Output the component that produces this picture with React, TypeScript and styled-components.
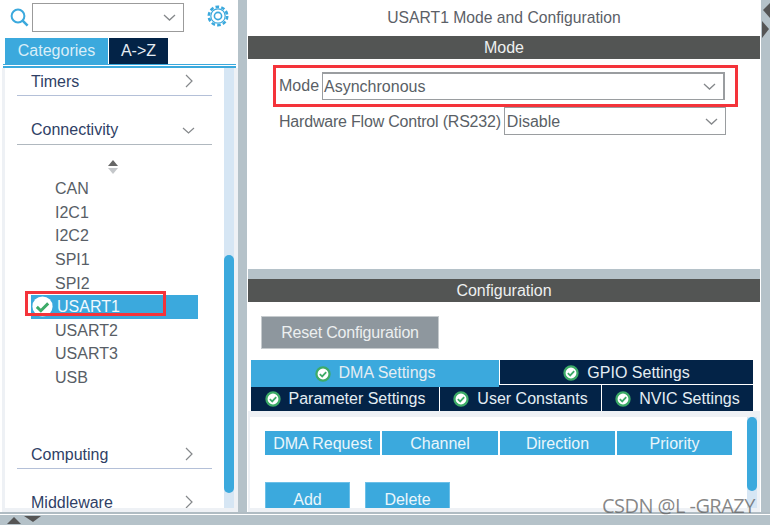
import * as React from 'react';
import styled, { createGlobalStyle } from 'styled-components';

const blue = '#3ba9dd';
const navy = '#032347';
const steel = '#b5c2c9';
const pale = '#eef1f5';

const GlobalStyle = createGlobalStyle`
  html, body {
    margin: 0;
    padding: 0;
    background: #fff;
  }
  body {
    font-family: "Liberation Sans", Arial, sans-serif;
    font-size: 16px;
    color: #5a5f66;
  }
`;

const Page = styled.div`
  position: relative;
  width: 770px;
  height: 525px;
  overflow: hidden;
  display: flex;
  flex-direction: column;
`;

const Main = styled.div`
  display: flex;
  height: 512px;
`;

const Sidebar = styled.aside`
  width: 238px;
  flex: none;
  display: flex;
  flex-direction: column;
`;

const SearchRow = styled.div`
  height: 38px;
  flex: none;
  display: flex;
  align-items: flex-start;
  padding: 3px 0 0 10px;
  box-sizing: border-box;
  svg {
    flex: none;
  }
`;

const SearchIcon = styled.svg`
  margin-top: 5px;
`;

const Combo = styled.div`
  width: 152px;
  height: 29px;
  margin-left: 3px;
  border: 1px solid #9b9b9b;
  box-sizing: border-box;
  display: flex;
  align-items: center;
  justify-content: flex-end;
  padding-right: 7px;
`;

const Gear = styled.svg`
  margin: 2px 0 0 23px;
`;

const CategoryTabs = styled.div`
  height: 26px;
  flex: none;
  display: flex;
  gap: 1px;
  padding-left: 5px;
`;

const CategoryTab = styled.div<{ $active?: boolean; $w: number }>`
  width: ${(p) => p.$w}px;
  background: ${(p) => (p.$active ? blue : navy)};
  color: ${(p) => (p.$active ? '#d9eef8' : '#e6edf3')};
  display: flex;
  align-items: center;
  justify-content: center;
`;

const TabRule = styled.div`
  flex: none;
  height: 4px;
  margin: 0 2px 0 3px;
  border-top: 1px solid ${blue};
  border-bottom: 2px solid ${blue};
  box-sizing: border-box;
`;

const TreeArea = styled.div`
  flex: 1;
  min-height: 0;
  display: flex;
  margin-left: 2px;
  padding-bottom: 4px;
  box-sizing: border-box;
  background: ${pale};
`;

const TreeList = styled.div`
  width: 219px;
  flex: none;
  height: 440px;
  background: #fff;
  border-left: 3px solid ${pale};
  overflow: hidden;
`;

const SectionHeader = styled.div<{ $top?: number; $rule?: string; $h?: number }>`
  height: ${(p) => p.$h ?? 28}px;
  margin: ${(p) => p.$top ?? 0}px 0 0 12px;
  width: 195px;
  box-sizing: border-box;
  border-bottom: 1px solid ${(p) => p.$rule ?? '#b4c0d8'};
  padding-left: 14px;
  display: flex;
  align-items: center;
  justify-content: space-between;
  color: #2f3f66;
`;

const Chevron = styled.svg<{ $right: number }>`
  flex: none;
  margin-right: ${(p) => p.$right}px;
`;

const SectionChevron = styled(Chevron)`
  margin-top: -2px;
`;

const SortMark = styled.div`
  height: 32.4px;
  box-sizing: border-box;
  padding: 15px 0 0 102px;
  svg {
    display: block;
  }
`;

const Item = styled.div<{ $selected?: boolean }>`
  position: relative;
  height: 23.6px;
  margin-left: 26px;
  width: 167px;
  box-sizing: border-box;
  padding-left: ${(p) => (p.$selected ? 26 : 24)}px;
  display: flex;
  align-items: center;
  background: ${(p) => (p.$selected ? blue : 'transparent')};
  color: ${(p) => (p.$selected ? '#f1f9fd' : '#585e66')};
`;

const ItemCheck = styled.svg`
  position: absolute;
  left: 1px;
  top: 1px;
`;

const RedMark = styled.div`
  position: absolute;
  left: -6px;
  top: -4px;
  width: 141px;
  height: 25px;
  border: 3px solid #f4333a;
  box-sizing: border-box;
  pointer-events: none;
`;

const ItemsEnd = styled.div`
  height: 51.6px;
`;

const ScrollTrack = styled.div<{ $w: number }>`
  width: ${(p) => p.$w}px;
  flex: none;
  background: #d6e6f4;
  display: flex;
  flex-direction: column;
`;

const ScrollThumb = styled.div<{ $top: number; $h: number }>`
  margin-top: ${(p) => p.$top}px;
  height: ${(p) => p.$h}px;
  background: ${blue};
  border-radius: 5px;
`;

const Sash = styled.div`
  width: 9px;
  flex: none;
  background: ${steel};
`;

const Panel = styled.main`
  width: 512px;
  margin-left: 1px;
  flex: none;
  display: flex;
  flex-direction: column;
`;

const PanelTitle = styled.div`
  height: 36px;
  flex: none;
  display: flex;
  align-items: center;
  justify-content: center;
  color: #5b6067;
  font-size: 15.7px;
`;

const BandTitle = styled.div`
  height: 23px;
  flex: none;
  background: #535554;
  color: #eef0f0;
  display: flex;
  align-items: center;
  justify-content: center;
`;

const ModeSection = styled.section`
  height: 210px;
  flex: none;
  padding: 6px 0 0 25px;
  box-sizing: border-box;
`;

const Highlight = styled.div`
  width: 465px;
  height: 42px;
  border: 3px solid #f4333a;
  box-sizing: border-box;
  display: flex;
  align-items: center;
  padding: 0 9px 0 3px;
`;

const FormRow = styled.div`
  height: 28px;
  display: flex;
  align-items: center;
  padding-left: 6px;
`;

const Label = styled.span<{ $tight?: boolean }>`
  white-space: nowrap;
  color: #5a5f66;
  letter-spacing: ${(p) => (p.$tight ? '-0.2px' : '0')};
  padding-top: ${(p) => (p.$tight ? 2 : 0)}px;
`;

const Select = styled.div<{ $w: number; $thick?: boolean }>`
  width: ${(p) => p.$w}px;
  height: 28px;
  margin-left: 3px;
  box-sizing: border-box;
  flex: none;
  display: flex;
  align-items: center;
  justify-content: space-between;
  padding: ${(p) => (p.$thick ? '0 7px 0 1px' : '1px 7px 0 2px')};
  border: 1px solid #9a9da0;
  border-width: ${(p) => (p.$thick ? '2px 2px 1px 1px' : '1px')};
  color: #5a5f66;
`;

const Splitter = styled.div`
  height: 10px;
  flex: none;
  background: ${steel};
`;

const ConfigBody = styled.section`
  flex: 1;
  min-height: 0;
  display: flex;
  flex-direction: column;
`;

const ResetButton = styled.button`
  width: 178px;
  height: 33px;
  margin: 14px 0 11px 13px;
  flex: none;
  background: #8e979e;
  border: 1px solid #c6cbce;
  color: #eceff0;
  font: inherit;
  letter-spacing: -0.2px;
  padding: 0;
`;

const TabRow = styled.div`
  display: flex;
  gap: 1px;
  margin: 0 7px 0 3px;
  height: 25px;
  flex: none;
`;

const SettingsTab = styled.div<{ $active?: boolean; $w: number }>`
  position: relative;
  width: ${(p) => p.$w}px;
  height: ${(p) => (p.$active ? 27 : 24)}px;
  z-index: ${(p) => (p.$active ? 1 : 0)};
  flex: none;
  background: ${(p) => (p.$active ? blue : navy)};
  color: #e4edf3;
  display: flex;
  align-items: ${(p) => (p.$active ? 'flex-start' : 'center')};
  padding-top: ${(p) => (p.$active ? 4 : 2)}px;
  box-sizing: border-box;
  justify-content: center;
  gap: 8px;
  svg {
    flex: none;
    margin-top: ${(p) => (p.$active ? 2 : 0)}px;
  }
`;

const TabRowLower = styled(TabRow)`
  height: 26px;
  ${SettingsTab} {
    height: 26px;
    padding-top: 1px;
  }
`;

const ContentFrame = styled.div`
  flex: 1;
  min-height: 0;
  background: ${pale};
  padding: 6px 0 4px 2px;
  display: flex;
`;

const ContentWhite = styled.div`
  width: 497px;
  flex: none;
  background: #fff;
  padding: 14px 0 0 15px;
  box-sizing: border-box;
  overflow: hidden;
`;

const HeadRow = styled.div`
  display: flex;
  gap: 2px;
  width: 467px;
`;

const HeadCell = styled.div<{ $w: number }>`
  width: ${(p) => p.$w}px;
  height: 24px;
  flex: none;
  background: ${blue};
  color: #eaf6fb;
  box-sizing: border-box;
  padding-top: 1px;
  display: flex;
  align-items: center;
  justify-content: center;
`;

const ActionRow = styled.div`
  display: flex;
  gap: 15px;
  margin-top: 27px;
`;

const ActionButton = styled.div`
  width: 85px;
  height: 33px;
  background: ${blue};
  color: #eaf6fb;
  border: 1px solid #6cc0e8;
  border-bottom: none;
  box-sizing: border-box;
  display: flex;
  align-items: center;
  justify-content: center;
  padding-top: 2px;
`;

const EdgeStrip = styled.div`
  margin-left: 1px;
  flex: 1;
  background: ${steel};
  position: relative;
`;

const EdgeArrows = styled.svg`
  position: absolute;
  left: 0;
  top: 0;
`;

const BottomBar = styled.div`
  height: 13px;
  flex: none;
  background: ${steel};
  border-top: 2px solid #b0bcc3;
  box-sizing: border-box;
  position: relative;
  &::before {
    content: '';
    display: block;
    height: 1px;
    background: #fff;
  }
`;

const SashArrows = styled.svg`
  position: absolute;
  left: 6px;
  top: 1px;
`;

const Watermark = styled.div`
  position: absolute;
  left: 602px;
  top: 496px;
  font-family: "Open Sans", sans-serif;
  font-size: 20px;
  line-height: 20px;
  letter-spacing: -0.55px;
  color: rgba(95, 95, 95, 0.75);
  white-space: nowrap;
  pointer-events: none;
`;

const ChevronRight = () => (
  <SectionChevron $right={19} width="8" height="14" viewBox="0 0 8 14" fill="none" stroke="#85888b" strokeWidth="1.2">
    <path d="M1 1l6 6-6 6" />
  </SectionChevron>
);

const ChevronDown = () => (
  <Chevron $right={0} width="13" height="7" viewBox="0 0 13 7" fill="none" stroke="#85888b" strokeWidth="1.3">
    <path d="M1 1l5.5 5L12 1" />
  </Chevron>
);

const Check = ({ size }: { size: number }) => (
  <svg width={size} height={size} viewBox="0 0 20 20">
    <circle cx="10" cy="10" r="8.2" fill="#fff" stroke="#3dab68" strokeWidth="2.8" />
    <path d="M6 10.2l3 2.8 5-5.4" fill="none" stroke="#3dab68" strokeWidth="2.2" />
  </svg>
);

const connectivity = ['CAN', 'I2C1', 'I2C2', 'SPI1', 'SPI2', 'USART1', 'USART2', 'USART3', 'USB'];

export default function App() {
  return (
    <Page>
      <GlobalStyle />
      <Main>
        <Sidebar>
          <SearchRow>
            <SearchIcon width="19" height="19" viewBox="0 0 19 19" fill="none" stroke={blue}>
              <circle cx="8" cy="8" r="6.4" strokeWidth="2" />
              <path d="M12.6 12.6l5 5" strokeWidth="2.6" />
            </SearchIcon>
            <Combo>
              <ChevronDown />
            </Combo>
            <Gear width="22" height="22" viewBox="0 0 22 22" fill="none" stroke={blue}>
              <circle cx="11" cy="11" r="9.2" strokeWidth="2.6" strokeDasharray="3.6 2.2" />
              <circle cx="11" cy="11" r="7.2" strokeWidth="1.2" />
              <circle cx="11" cy="11" r="3.6" strokeWidth="1.6" />
            </Gear>
          </SearchRow>
          <CategoryTabs>
            <CategoryTab $active $w={103}>Categories</CategoryTab>
            <CategoryTab $w={59}>A-&gt;Z</CategoryTab>
          </CategoryTabs>
          <TabRule />
          <TreeArea>
            <TreeList>
              <SectionHeader>
                Timers
                <ChevronRight />
              </SectionHeader>
              <SectionHeader $top={20} $h={29} $rule="#b0b8bf">
                Connectivity
                <Chevron $right={17} width="13" height="7" viewBox="0 0 13 7" fill="none" stroke="#85888b" strokeWidth="1.2">
                  <path d="M1 1l5.5 5L12 1" />
                </Chevron>
              </SectionHeader>
              <SortMark>
                <svg width="12" height="14" viewBox="0 0 12 14">
                  <path d="M6 0l5 6H1z" fill="#666" />
                  <path d="M6 14l5-6H1z" fill="#c4c7ca" />
                </svg>
              </SortMark>
              {connectivity.map((name) => (
                <Item key={name} $selected={name === 'USART1'}>
                  {name === 'USART1' && (
                    <ItemCheck width="21" height="21" viewBox="0 0 20 20">
                      <circle cx="10" cy="10" r="9.6" fill="#fff" />
                      <path d="M4.6 10.4l3.8 3.6 7-7" fill="none" stroke="#3dab68" strokeWidth="2.8" />
                    </ItemCheck>
                  )}
                  {name}
                  {name === 'USART1' && <RedMark />}
                </Item>
              ))}
              <ItemsEnd />
              <SectionHeader>
                Computing
                <ChevronRight />
              </SectionHeader>
              <SectionHeader $top={20}>
                Middleware
                <ChevronRight />
              </SectionHeader>
            </TreeList>
            <ScrollTrack $w={10}>
              <ScrollThumb $top={187} $h={238} />
            </ScrollTrack>
          </TreeArea>
        </Sidebar>
        <Sash />
        <Panel>
          <PanelTitle>USART1 Mode and Configuration</PanelTitle>
          <BandTitle>Mode</BandTitle>
          <ModeSection>
            <Highlight>
              <Label>Mode</Label>
              <Select $w={403} $thick>
                Asynchronous
                <ChevronDown />
              </Select>
            </Highlight>
            <FormRow>
              <Label $tight>Hardware Flow Control (RS232)</Label>
              <Select $w={222}>
                Disable
                <ChevronDown />
              </Select>
            </FormRow>
          </ModeSection>
          <Splitter />
          <BandTitle>Configuration</BandTitle>
          <ConfigBody>
            <ResetButton>Reset Configuration</ResetButton>
            <TabRow>
              <SettingsTab $active $w={248}><Check size={16} />DMA Settings</SettingsTab>
              <SettingsTab $w={253}><Check size={16} />GPIO Settings</SettingsTab>
            </TabRow>
            <TabRowLower>
              <SettingsTab $w={188}><Check size={16} />Parameter Settings</SettingsTab>
              <SettingsTab $w={161}><Check size={16} />User Constants</SettingsTab>
              <SettingsTab $w={151}><Check size={16} />NVIC Settings</SettingsTab>
            </TabRowLower>
            <ContentFrame>
              <ContentWhite>
                <HeadRow>
                  <HeadCell $w={115}>DMA Request</HeadCell>
                  <HeadCell $w={116}>Channel</HeadCell>
                  <HeadCell $w={115}>Direction</HeadCell>
                  <HeadCell $w={115}>Priority</HeadCell>
                </HeadRow>
                <ActionRow>
                  <ActionButton>Add</ActionButton>
                  <ActionButton>Delete</ActionButton>
                </ActionRow>
              </ContentWhite>
              <ScrollTrack $w={10}>
                <ScrollThumb $top={0} $h={74} />
              </ScrollTrack>
            </ContentFrame>
          </ConfigBody>
        </Panel>
        <EdgeStrip>
          <EdgeArrows width="9" height="40" viewBox="0 0 9 40">
            <path d="M2 10l7-7v15z" fill="#555" />
            <path d="M1 21l7 8-7 9z" fill="#555" />
          </EdgeArrows>
        </EdgeStrip>
      </Main>
      <BottomBar>
        <SashArrows width="36" height="10" viewBox="0 0 36 10">
          <path d="M1 9l7-7 7 7z" fill="#555" />
          <path d="M18 1h17l-8 6z" fill="#555" />
        </SashArrows>
      </BottomBar>
      <Watermark>CSDN @L -GRAZY</Watermark>
    </Page>
  );
}
